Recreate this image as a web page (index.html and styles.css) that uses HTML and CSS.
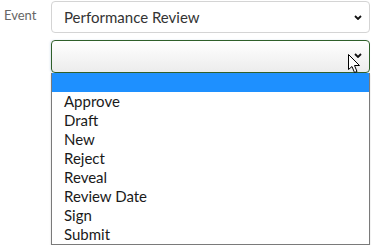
FILE: index.html
```html
<!DOCTYPE html>
<html lang="en">
<head>
  <meta charset="UTF-8" />
  <meta name="viewport" content="width=device-width, initial-scale=1" />
  <title>Event</title>
  <link rel="stylesheet" href="styles.css">
</head>
<body>
  <div class="form-row">
    <label class="field-label">Event</label>
    <div class="field">
      <div class="select">
        <span class="select-value">Performance Review</span>
        <svg class="chevron" width="8" height="5" viewBox="0 0 8 5"><path d="M1 1 L4 4 L7 1" fill="none" stroke="#111" stroke-width="1.8"/></svg>
      </div>

      <div class="select select-open">
        <span class="select-value"></span>
        <svg class="chevron" width="8" height="5" viewBox="0 0 8 5"><path d="M1 1 L4 4 L7 1" fill="none" stroke="#111" stroke-width="1.8"/></svg>
        <!-- mouse pointer over the open select -->
        <svg class="cursor" width="13" height="20" viewBox="0 0 13 20">
          <path d="M0.5 0.5 L0.5 15.5 L4 12.5 L6.5 18.5 L9 17.5 L6.5 11.5 L11.5 11.5 Z" fill="#fff" stroke="#000" stroke-width="1"/>
        </svg>
      </div>

      <ul class="options">
        <li class="option active">&nbsp;</li>
        <li class="option">Approve</li>
        <li class="option">Draft</li>
        <li class="option">New</li>
        <li class="option">Reject</li>
        <li class="option">Reveal</li>
        <li class="option">Review Date</li>
        <li class="option">Sign</li>
        <li class="option">Submit</li>
      </ul>
    </div>
  </div>
</body>
</html>
```

FILE: styles.css
```css
body {
  margin: 0;
  font-family: Lato, "Noto Sans", sans-serif;
  background: #fff;
  color: #222;
}
.form-row {
  display: grid;
  grid-template-columns: 51px 319px;
  padding-top: 1px;
}
.field-label {
  padding: 6px 0 0 4px;
  font-size: 13px;
  color: #666;
}
.field {
  display: flex;
  flex-direction: column;
}
.select {
  position: relative;
  display: flex;
  align-items: center;
  justify-content: space-between;
  height: 32px;
  box-sizing: border-box;
  padding: 0 7px 0 12px;
  border: 1px solid #d4d4d4;
  border-radius: 4px;
  background: #fff;
  font-size: 15px;
  color: #333;
}
.select-open {
  margin-top: 7px;
  height: 33px;
  border-color: #2f5f2a;
  background: linear-gradient(#ffffff, #ececec);
  box-shadow: -1px 0 2px rgba(120, 150, 200, 0.25);
}
.select-open .chevron {
  margin-top: -3px;
}
.cursor {
  position: absolute;
  left: 296px;
  top: 13px;
}
.options {
  list-style: none;
  margin: 0;
  padding: 0;
  border: 1px solid #7a7a7a;
  border-top: none;
  box-shadow: 0 1px 2px rgba(0, 0, 0, 0.15);
  background: #fff;
}
.option {
  height: 19px;
  line-height: 19px;
  padding-left: 12px;
  font-size: 15px;
  color: #1a1a1a;
}
.option.active {
  background: #1e90ff;
}
```
